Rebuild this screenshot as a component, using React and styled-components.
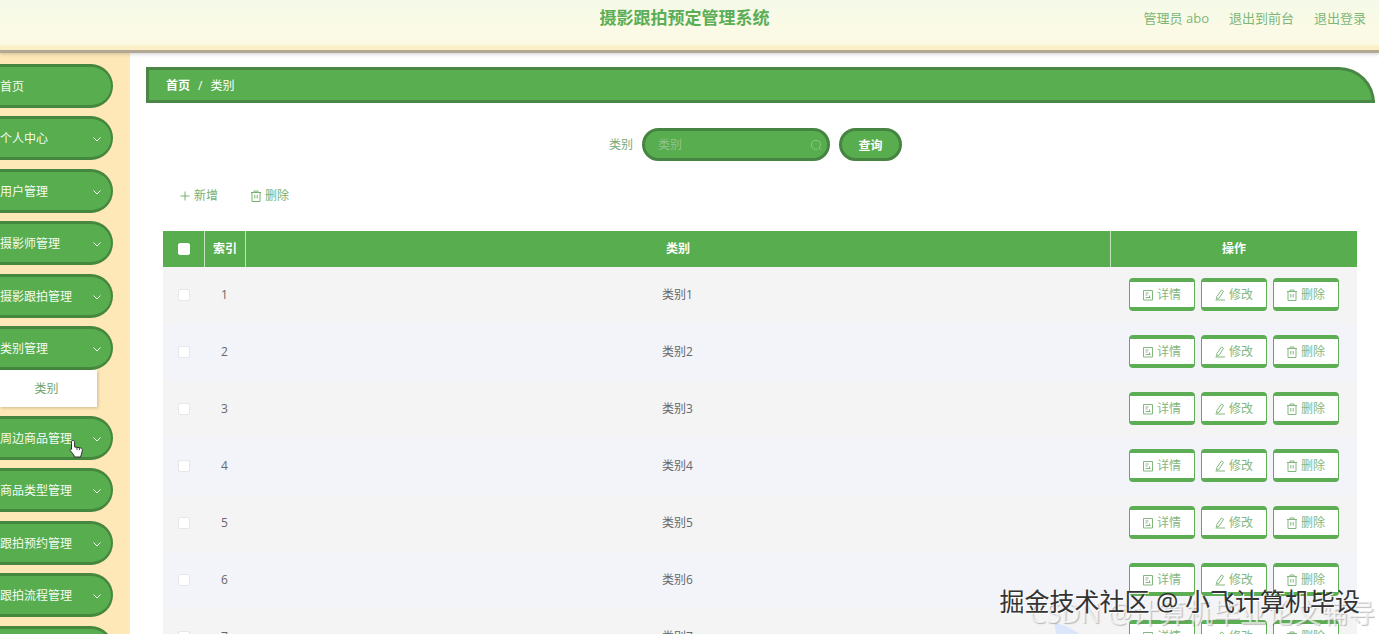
import React from "react";
import styled, { createGlobalStyle } from "styled-components";

const GlobalStyle = createGlobalStyle`
  *, *::before, *::after { box-sizing: border-box; }
  body {
    margin: 0;
    background: #fff;
    color: #66686c;
    font: 12px/20px "Open Sans", "Noto Sans CJK SC", sans-serif;
  }
  button, input { font: inherit; }
`;

const Shell = styled.div`
  position: relative;
  display: flex;
  flex-direction: column;
  height: 100vh;
  overflow: hidden;
`;

const Header = styled.header`
  position: relative;
  z-index: 1;
  display: grid;
  grid-template-columns: 1fr auto 1fr;
  flex: none;
  align-items: start;
  height: 53px;
  padding: 8px 13px 0;
  border-bottom: 3px solid #b3a893;
  background: linear-gradient(#f4fae8 0, #fafae6 24px, #fafae6 44px, #fbf0c8 46px, #fbeec4 50px);
  box-shadow: 0 1px 4px #0003;
`;

const Title = styled.h1`
  grid-column: 2;
  margin: 0;
  padding-right: 10px;
  color: #5bae55;
  font-size: 17px;
  font-weight: 700;
  line-height: 20px;
`;

const UserNav = styled.nav`
  display: flex;
  justify-content: flex-end;
  gap: 20px;
  color: #7db67a;
  font-size: 13px;
  line-height: 20px;

  a { color: inherit; text-decoration: none; }
`;

const Body = styled.div`
  display: flex;
  flex: 1;
  min-height: 0;
`;

const Sidebar = styled.aside`
  flex: none;
  width: 130px;
  overflow: hidden;
  padding-top: 11px;
  background: #fee8b7;
`;

const Menu = styled.ul`
  margin: 0;
  padding: 0;
  list-style: none;
`;

const MenuItem = styled.li`
  margin-bottom: 8px;
  &:nth-child(even) { margin-bottom: 9px; }
`;

const MenuButton = styled.button`
  display: flex;
  align-items: center;
  justify-content: space-between;
  width: 113px;
  height: 44px;
  padding: 1px 8px 0 0;
  border: solid #45873f;
  border-width: 3px 2px 3px 0;
  border-radius: 0 22px 22px 0;
  background: #58ad4e;
  color: #f4fbf2;
  white-space: nowrap;
  cursor: pointer;
`;

const SubLink = styled.a`
  display: block;
  width: 97px;
  height: 37px;
  padding-right: 4px;
  background: #fff;
  box-shadow: 1px 1px 3px #0003;
  color: #6fa36b;
  line-height: 38px;
  text-align: center;
  text-decoration: none;
`;

const Main = styled.main`
  flex: 1;
  min-width: 0;
  overflow-y: auto;
  scrollbar-width: none;
  padding: 14px 4px 0 16px;
`;

const Breadcrumb = styled.nav`
  display: flex;
  align-items: center;
  gap: 8px;
  height: 36px;
  padding: 2px 0 0 17px;
  border: 3px solid #4a8645;
  border-radius: 0 36px 0 0;
  background: #59ae50;
  color: #fff;

  a { color: inherit; font-weight: 700; text-decoration: none; }
`;

const Content = styled.section`
  padding: 25px 18px 0 17px;
`;

const SearchForm = styled.form`
  display: flex;
  align-items: center;
  justify-content: center;
  gap: 9px;
  padding-right: 9px;

  label { color: #7aa877; }
`;

const SearchBox = styled.div`
  display: flex;
  align-items: center;
  width: 188px;
  height: 33px;
  padding: 0 5px 0 13px;
  border: 3px solid #468441;
  border-radius: 17px;
  background: #58ad4e;
  color: #8cca86;

  input {
    flex: 1;
    min-width: 0;
    padding: 0;
    border: 0;
    outline: 0;
    background: none;
    color: #fff;
  }
  input::placeholder { color: #92c48e; opacity: 1; }
`;

const QueryButton = styled.button`
  width: 63px;
  height: 33px;
  padding: 2px 0 0;
  border: 3px solid #468441;
  border-radius: 17px;
  background: #58ad4e;
  color: #fff;
  font-weight: 700;
  line-height: 20px;
  cursor: pointer;
`;

const Toolbar = styled.div`
  display: flex;
  gap: 32px;
  margin: 25px 0 25px 16px;
`;

const TextButton = styled.button`
  display: flex;
  align-items: center;
  gap: 3px;
  padding: 0;
  border: 0;
  background: none;
  color: #76b172;
  line-height: 20px;
  cursor: pointer;
`;

const Table = styled.table`
  width: 100%;
  table-layout: fixed;
  border-collapse: separate;
  border-spacing: 0;
  text-align: center;

  th {
    height: 36px;
    padding: 0;
    background: #58ad4e;
    color: #fff;
    font-weight: 700;
  }
  th + th { border-left: 1px solid #c2e2bd; }
  td {
    height: 57px;
    padding: 0 0 2px;
    background: #f4f4f4;
  }
  tbody tr:nth-child(even) td { background: #f2f4f9; }
`;

const Col = styled.col`
  width: ${(p) => p.$w || "auto"};
`;

const Tick = styled.input.attrs({ type: "checkbox" })`
  display: block;
  appearance: none;
  width: 12px;
  height: 12px;
  margin: 0 auto;
  border: 1px solid ${(p) => (p.$head ? "#fff" : "#e6e7ea")};
  border-radius: 2px;
  background: #fff;
  &:checked { background: #45873f; }
`;

const Actions = styled.div`
  display: flex;
  justify-content: center;
  gap: 6px;
`;

const ActionButton = styled.button`
  display: flex;
  align-items: center;
  justify-content: center;
  gap: 3px;
  width: 66px;
  height: 33px;
  padding: 1px 0 0;
  border: solid #5cad54;
  border-width: 4px 1px;
  border-radius: 4px;
  background: #fff;
  color: #83b77f;
  cursor: pointer;
`;

const Svg = styled.svg`
  flex: none;
  width: 12px;
  height: 12px;
  fill: none;
  stroke: currentColor;
  stroke-width: 1;
`;

const Watermark = styled.div`
  position: absolute;
  z-index: 2;
  right: ${(p) => p.$right}px;
  bottom: ${(p) => p.$bottom}px;
  color: ${(p) => p.$color};
  font-size: ${(p) => p.$size}px;
  line-height: 32px;
  white-space: nowrap;
  text-shadow: ${(p) => p.$shadow};
  pointer-events: none;
`;

const Pointer = styled.svg`
  position: absolute;
  z-index: 2;
  left: 69px;
  top: 439px;
  width: 15px;
  height: 19px;
  pointer-events: none;
`;

const Emblem = styled.svg`
  position: absolute;
  z-index: 1;
  right: 297px;
  bottom: 0;
  width: 30px;
  height: 12px;
  pointer-events: none;
`;

const paths = {
  down: "M2.500 4.500 6 8l3.500-3.500",
  plus: "M6 1.500v9M1.500 6h9",
  search: "M7.500 10.200a4.600 4.600 0 1 1 2.200-1.600M8.800 8.300l2 2.500",
  trash: "M1 2.500h10M4 2.500V1h4v1.500M2 2.500v9h8v-9M4.800 5v3.500M7.200 5v3.500",
  detail: "M1.500 1.500h9v9.500h-9zM3.500 4h3M3.500 6h2M3.500 8.500h5M7.500 6.500v2",
  edit: "M7.500 1 9.500 2.300 5.200 9 2.600 10.200 2.800 7.600zM1.500 11h9.500",
};

const Icon = ({ name }) => (
  <Svg viewBox="0 0 12 12" aria-hidden="true">
    <path d={paths[name]} />
  </Svg>
);

const menu = [
  { label: "首页", leaf: true },
  { label: "个人中心" },
  { label: "用户管理" },
  { label: "摄影师管理" },
  { label: "摄影跟拍管理" },
  { label: "类别管理", child: "类别" },
  { label: "周边商品管理" },
  { label: "商品类型管理" },
  { label: "跟拍预约管理" },
  { label: "跟拍流程管理" },
  { label: "系统管理" },
];

const rows = ["类别1", "类别2", "类别3", "类别4", "类别5", "类别6", "类别7"];

const actions = [
  { icon: "detail", label: "详情" },
  { icon: "edit", label: "修改" },
  { icon: "trash", label: "删除" },
];

export default function App() {
  return (
    <Shell>
      <GlobalStyle />
      <Header>
        <Title>摄影跟拍预定管理系统</Title>
        <UserNav>
          <span>管理员 abo</span>
          <a href="#front">退出到前台</a>
          <a href="#logout">退出登录</a>
        </UserNav>
      </Header>
      <Body>
        <Sidebar>
          <Menu>
            {menu.map((m) => (
              <MenuItem key={m.label}>
                <MenuButton type="button">
                  {m.label}
                  {!m.leaf && <Icon name="down" />}
                </MenuButton>
                {m.child && <SubLink href="#category">{m.child}</SubLink>}
              </MenuItem>
            ))}
          </Menu>
        </Sidebar>
        <Main>
          <Breadcrumb>
            <a href="#home">首页</a>
            <span>/</span>
            <span>类别</span>
          </Breadcrumb>
          <Content>
            <SearchForm onSubmit={(e) => e.preventDefault()}>
              <label htmlFor="category">类别</label>
              <SearchBox>
                <input id="category" placeholder="类别" />
                <Icon name="search" />
              </SearchBox>
              <QueryButton type="submit">查询</QueryButton>
            </SearchForm>
            <Toolbar>
              <TextButton type="button"><Icon name="plus" />新增</TextButton>
              <TextButton type="button"><Icon name="trash" />删除</TextButton>
            </Toolbar>
            <Table>
              <colgroup>
                <Col $w="41px" />
                <Col $w="41px" />
                <Col />
                <Col $w="247px" />
              </colgroup>
              <thead>
                <tr>
                  <th><Tick $head aria-label="全选" /></th>
                  <th>索引</th>
                  <th>类别</th>
                  <th>操作</th>
                </tr>
              </thead>
              <tbody>
                {rows.map((name, i) => (
                  <tr key={name}>
                    <td><Tick aria-label={name} /></td>
                    <td>{i + 1}</td>
                    <td>{name}</td>
                    <td>
                      <Actions>
                        {actions.map((a) => (
                          <ActionButton key={a.icon} type="button">
                            <Icon name={a.icon} />
                            {a.label}
                          </ActionButton>
                        ))}
                      </Actions>
                    </td>
                  </tr>
                ))}
              </tbody>
            </Table>
          </Content>
        </Main>
      </Body>
      <Emblem viewBox="0 0 30 12" aria-hidden="true">
        <path d="M2 0Q14 3 28 12H4Z" fill="#dce6fb" />
      </Emblem>
      <Watermark $size={27} $right={4} $bottom={5} $color="#ffffffb0" $shadow="1px 1px 1px #7777">
        CSDN @计算机毕业论文辅导
      </Watermark>
      <Watermark $size={25} $right={19} $bottom={17} $color="#333" $shadow="1px 1px 0 #fff">
        掘金技术社区 @ 小飞计算机毕设
      </Watermark>
      <Pointer viewBox="0 0 15 19" aria-hidden="true">
        <path
          d="M4 1.500c1 0 1.600.7 1.600 1.600V8l5.800.9c1.500.3 2.100 1 2 2.300L12.500 15l-1 3H5.500L4.800 16 1.200 11.500c-.5-1 .5-1.800 1.300-1.200V3.100C2.500 2.200 3 1.500 4 1.500z"
          fill="#fff"
          stroke="#333"
        />
        <path d="M8 8.500v2.500M10.500 9v2.200" stroke="#555" fill="none" />
      </Pointer>
    </Shell>
  );
}
